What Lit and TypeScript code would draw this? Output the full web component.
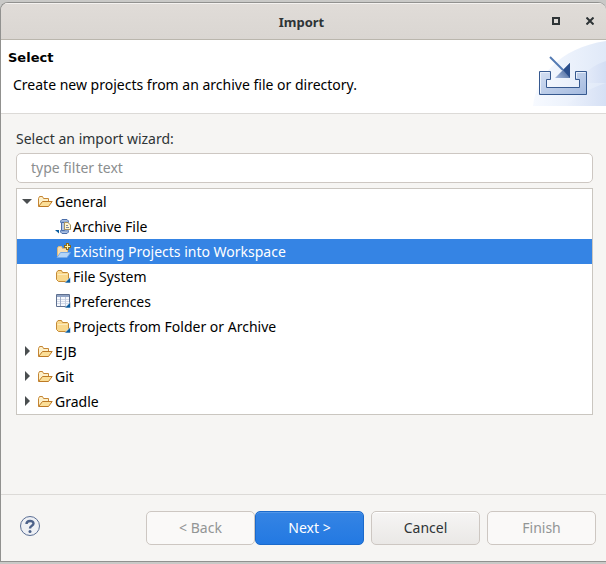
import { LitElement, html, css, svg, nothing } from "lit";
import { customElement, state } from "lit/decorators.js";

type IconName = "folder-open" | "archive" | "project" | "folder" | "table";

interface Wizard {
  name: string;
  icon: IconName;
}

interface Category {
  name: string;
  wizards: Wizard[];
}

const CATEGORIES: Category[] = [
  {
    name: "General",
    wizards: [
      { name: "Archive File", icon: "archive" },
      { name: "Existing Projects into Workspace", icon: "project" },
      { name: "File System", icon: "folder" },
      { name: "Preferences", icon: "table" },
      { name: "Projects from Folder or Archive", icon: "folder" },
    ],
  },
  { name: "EJB", wizards: [] },
  { name: "Git", wizards: [] },
  { name: "Gradle", wizards: [] },
];

const corner = svg`<path d="M15.500 9V15H9.500Z" fill="#0b5c9e" stroke="#fff" stroke-width=".6"/>`;

const ICONS = {
  "folder-open": svg`
    <path d="M1.500 13V5.500L2.500 3.500H5.500L6.500 5.500H11.500V8" fill="#fdf0c9" stroke="#c58634"/>
    <path d="M1.500 13.500L5.500 8.500H15.200L11.500 13.500Z" fill="#fbdf98" stroke="#bd7a25" stroke-linejoin="round"/>`,
  archive: svg`
    <path d="M5.500 4.500V3L7 1.500H12L13.500 3V4.500M5.500 12.500V14L7 15.500H12L13.500 14V12.500" fill="#a9bfe2" stroke="#4b6ea8"/>
    <path d="M5 3.500H14V5H5ZM5 12H14V13.500H5Z" fill="#7f9dcc"/>
    <path d="M6.500 4.500H9.500V12.500H6.500Z" fill="#b4c8e8" stroke="#4b6ea8"/>
    <path d="M9.500 4.500H13L15.500 7V11.500H9.500Z" fill="#fff5d2" stroke="#a89460"/>
    <path d="M11 7.500H13M11 9.500H14" stroke="#7d8ca5"/>
    <path d="M0 12L4 15.500V12Z" fill="#0b5c9e"/>`,
  project: svg`
    <path d="M2.500 13V5L3.500 3.500H6.500L7.500 5.500H12.500V9" fill="#f8deb0" stroke="#e0b876"/>
    <path d="M2 14.500L5.500 9.500H15.500L12 14.500Z" fill="#b3d5f8" stroke="#78aae6" stroke-linejoin="round"/>
    <path d="M12.500 0V7M9 3.500H16" stroke="#8a6a18" stroke-width="3"/>
    <path d="M12.500 1V6M10 3.500H15" stroke="#fff3a8"/>`,
  folder: svg`
    <path d="M1.500 11.500V4.500L3 2.500H6.500L7.500 4.500H12.500L13.500 5.500V12.500L12.500 13.500H3.500Z" fill="#f9d88d" stroke="#c58a35" stroke-linejoin="round"/>
    <path d="M2.500 6.500H12.500" stroke="#fdebbd"/>${corner}`,
  table: svg`
    <path d="M1.500 1.500H14.500V13.500H1.500Z" fill="#f7f9fd" stroke="#5f7090"/>
    <path d="M2 2H14V4H2Z" fill="#90a3c4"/>
    <path d="M2 6.500H14M2 8.500H14M2 10.500H14" stroke="#d3dae8"/>
    <path d="M5.500 4V13" stroke="#a0aec8"/>
    <path d="M10.500 4V13" stroke="#c3cddf"/>${corner}`,
};

@customElement("app-root")
export class AppRoot extends LitElement {
  @state() private open = new Set(["General"]);
  @state() private selected = "Existing Projects into Workspace";

  static styles = css`
    :host {
      display: block;
      padding: 2px 0;
      font: 14px/20px "Noto Sans", "Open Sans", sans-serif;
      color: #000;
      background: #c9c9c7;
    }
    * {
      box-sizing: border-box;
    }
    .window {
      display: flex;
      flex-direction: column;
      min-height: calc(100vh - 4px);
      border: solid #91918f;
      border-width: 1px 0 1px 1px;
      border-radius: 8px 8px 0 0;
      background: #f6f5f3;
      overflow: hidden;
    }
    .titlebar {
      display: grid;
      grid-template-columns: 1fr auto 1fr;
      align-items: center;
      height: 37px;
      padding-right: 4px;
      border-bottom: 1px solid #bab6ad;
      background: linear-gradient(#e0dcd8, #dad6d2);
      box-shadow: inset 0 1px #f4f2f0;
    }
    .titlebar h1 {
      grid-column: 2;
      margin: 0;
      padding-top: 2px;
      font-size: 13px;
      font-weight: 700;
      color: #2e3436;
    }
    .controls {
      display: flex;
      justify-content: flex-end;
      gap: 10px;
    }
    .controls button {
      display: grid;
      place-items: center;
      width: 24px;
      height: 24px;
      padding: 0;
      border: 0;
      background: none;
    }
    .banner {
      display: flex;
      justify-content: space-between;
      height: 74px;
      border-bottom: 1px solid #dcdad7;
      background: #fff;
    }
    .banner h2 {
      margin: 0;
      padding: 8px 7px 0;
      font: bold 13px/20px "DejaVu Sans", sans-serif;
    }
    .banner p {
      margin: 0;
      padding: 7px 12px;
    }
    .content {
      flex: 1;
      display: flex;
      flex-direction: column;
      padding: 15px 13px 16px 15px;
    }
    .content label {
      color: #2e3436;
      margin-bottom: 4px;
    }
    .filter {
      width: 100%;
      height: 30px;
      margin-bottom: 5px;
      padding: 0 14px 2px;
      border: 1px solid #cdc7c2;
      border-radius: 5px;
      background: #fff;
      font: inherit;
    }
    .filter::placeholder {
      color: #8b8e8f;
      opacity: 1;
    }
    .tree,
    .tree ul {
      list-style: none;
      margin: 0;
      padding: 0;
    }
    .tree {
      border: 1px solid #cac6c0;
      background: #fff;
    }
    .row {
      display: flex;
      align-items: center;
      width: 100%;
      height: 25px;
      padding: 0 0 0 4px;
      border: 0;
      background: none;
      color: #000;
      font: inherit;
      text-align: left;
    }
    .row.leaf {
      padding-left: 38px;
    }
    .row.selected {
      background: #3584e4;
      color: #fff;
    }
    .row .arrow {
      width: 12px;
      height: 13px;
      margin-right: 4px;
    }
    .row .icon {
      width: 16px;
      height: 17px;
      margin-right: 2px;
    }
    .footer {
      display: flex;
      align-items: center;
      padding: 16px 10px 16px 18px;
      border-top: 1px solid #dcdad7;
    }
    .help {
      width: 22px;
      height: 22px;
      padding: 0;
      border: 0;
      background: none;
      margin: 0 auto 4px 0;
    }
    .help svg,
    .row svg,
    .controls svg,
    .banner svg {
      display: block;
      flex: none;
    }
    .buttons {
      display: flex;
      gap: 7px;
    }
    .pair {
      display: flex;
    }
    .btn {
      width: 109px;
      height: 34px;
      padding: 0;
      border: 1px solid #cdc7c2;
      border-radius: 5px;
      background: linear-gradient(#f6f5f4, #eae8e6);
      box-shadow: inset 0 1px #fff;
      color: #2e3436;
      font: inherit;
    }
    .btn:disabled {
      background: #faf9f8;
      box-shadow: none;
      color: #929595;
    }
    .btn.primary {
      border-color: #1b6acb;
      background: linear-gradient(#3584e4, #2379e2);
      box-shadow: inset 0 1px #5397e8;
      color: #fff;
    }
  `;

  private toggle(name: string) {
    const next = new Set(this.open);
    next.has(name) ? next.delete(name) : next.add(name);
    this.open = next;
  }

  private icon(name: IconName) {
    return html`<svg class="icon" viewBox="0 0 16 17" fill="none" aria-hidden="true">${ICONS[name]}</svg>`;
  }

  private category(item: Category) {
    const open = this.open.has(item.name);
    return html`<li role="treeitem" aria-expanded=${open}>
      <button class="row" @click=${() => this.toggle(item.name)}>
        <svg class="arrow" viewBox="0 0 12 13" fill="#4a4e50" aria-hidden="true">
          <path d=${open ? "M1 4H11L6 9Z" : "M4 1V11L9 6Z"} />
        </svg>
        ${this.icon("folder-open")}${item.name}
      </button>
      ${open && item.wizards.length
        ? html`<ul role="group">
            ${item.wizards.map(
              (w) => html`<li role="treeitem" aria-selected=${w.name === this.selected}>
                <button
                  class="row leaf ${w.name === this.selected ? "selected" : ""}"
                  @click=${() => (this.selected = w.name)}
                >
                  ${this.icon(w.icon)}${w.name}
                </button>
              </li>`
            )}
          </ul>`
        : nothing}
    </li>`;
  }

  private importArt() {
    return html`<svg width="76" height="66" viewBox="0 0 76 66" fill="none" aria-hidden="true">
      <defs>
        <linearGradient id="sky" x1="0" y1="0" x2="1" y2="0">
          <stop offset="0" stop-color="#f7faff" />
          <stop offset="1" stop-color="#e0e9f8" />
        </linearGradient>
        <linearGradient id="band" x1="0" y1="0" x2="1" y2="0">
          <stop offset="0" stop-color="#eef3fc" />
          <stop offset="1" stop-color="#d3def4" />
        </linearGradient>
        <linearGradient id="tray" x1="0" y1="0" x2="1" y2="1">
          <stop offset="0" stop-color="#d3dff2" />
          <stop offset="1" stop-color="#a4badf" />
        </linearGradient>
        <linearGradient id="head" x1="0" y1="1" x2="1" y2="0">
          <stop offset="0" stop-color="#a8bce0" />
          <stop offset="1" stop-color="#24477f" />
        </linearGradient>
      </defs>
      <path d="M3 66C6 38 28 8 76 1V66Z" fill="url(#sky)" />
      <path d="M44 43C53 34 63 25 76 21V43Z" fill="url(#band)" />
      <path d="M34 66C48 56 60 48 76 43V66Z" fill="url(#band)" opacity=".8" />
      <path
        d="M9.500 31.500H20.500V39.500H16.500V47.500H49.500V39.500H45.500V31.500H56.500V54.500H9.500Z"
        fill="url(#tray)"
        stroke="#36598f"
      />
      <path d="M10.500 53V32.500H19.500M46.500 38V32.500H55.500" stroke="#e9f0fa" />
      <path d="M20 17L33 30" stroke="#537ab3" stroke-width="2" />
      <path d="M40 23V38H25Z" fill="url(#head)" />
      <path d="M40 23V38L33 30Z" fill="#2b4f8c" />
    </svg>`;
  }

  render() {
    return html`<main class="window">
      <header class="titlebar">
        <h1>Import</h1>
        <div class="controls">
          <button aria-label="Maximize">
            <svg width="8" height="8"><path d="M1 1H7V7H1Z" fill="none" stroke="#2e3436" stroke-width="2" /></svg>
          </button>
          <button aria-label="Close">
            <svg width="8" height="8"><path d="M.5 .5L7.500 7.500M7.500 .5L.5 7.500" stroke="#2e3436" stroke-width="2" /></svg>
          </button>
        </div>
      </header>
      <section class="banner">
        <div>
          <h2>Select</h2>
          <p>Create new projects from an archive file or directory.</p>
        </div>
        ${this.importArt()}
      </section>
      <section class="content">
        <label for="filter">Select an import wizard:</label>
        <input class="filter" id="filter" type="text" placeholder="type filter text" />
        <ul class="tree" role="tree">${CATEGORIES.map((c) => this.category(c))}</ul>
      </section>
      <footer class="footer">
        <button class="help" aria-label="Help">
          <svg width="22" height="22" viewBox="0 0 22 22" fill="none">
            <circle cx="11" cy="11" r="9.500" fill="#eef0f4" stroke="#5a6e94" />
            <path d="M7.500 9C7.500 5 14.500 5 14.500 8.500C14.500 11 11 10.500 11 13.500" stroke="#4c6189" stroke-width="2.400" />
            <circle cx="11" cy="16.500" r="1.500" fill="#4c6189" />
          </svg>
        </button>
        <div class="buttons">
          <div class="pair">
            <button class="btn" disabled>&lt; Back</button>
            <button class="btn primary">Next &gt;</button>
          </div>
          <button class="btn">Cancel</button>
          <button class="btn" disabled>Finish</button>
        </div>
      </footer>
    </main>`;
  }
}
